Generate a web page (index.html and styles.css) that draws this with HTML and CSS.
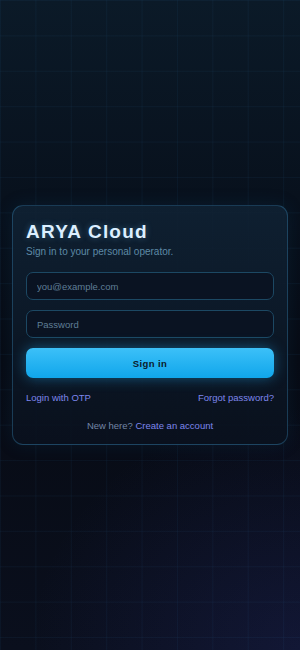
FILE: index.html
```html
<!DOCTYPE html>
<html lang="en">
<head>
    <meta charset="UTF-8">
    <meta name="viewport" content="width=device-width, initial-scale=1.0">
    <title>ARYA Cloud</title>
    <link rel="stylesheet" href="styles.css">
</head>
<body>
    <div class="grid"></div>

    <form class="login-card" onsubmit="return false">
        <h1 class="brand">ARYA Cloud</h1>
        <p class="tagline">Sign in to your personal operator.</p>

        <input class="field" type="email" placeholder="you@example.com">
        <input class="field" type="password" placeholder="Password">

        <button class="signin-btn" type="submit">Sign in</button>

        <div class="links">
            <a href="#">Login with OTP</a>
            <a href="#">Forgot password?</a>
        </div>

        <p class="signup">New here? <a href="#">Create an account</a></p>
    </form>
</body>
</html>
```

FILE: styles.css
```css
* {
    margin: 0;
    padding: 0;
    box-sizing: border-box;
}

html, body {
    height: 100%;
}

body {
    font-family: "Liberation Sans", Arial, sans-serif;
    background:
        radial-gradient(ellipse 120% 50% at 100% 100%, rgba(50, 55, 150, 0.2), transparent 75%),
        linear-gradient(180deg, #0b1a28 0%, #08111d 30%, #070b14 55%, #0a0f1d 100%);
    min-height: 100vh;
    display: flex;
    align-items: center;
    justify-content: center;
    padding: 0 12px;
    position: relative;
    overflow: hidden;
}

.grid {
    position: absolute;
    inset: 0;
    background-image:
        linear-gradient(rgba(56, 150, 220, 0.06) 1px, transparent 1px),
        linear-gradient(90deg, rgba(56, 150, 220, 0.06) 1px, transparent 1px);
    background-size: 35.4px 35.4px;
    pointer-events: none;
}

.login-card {
    position: relative;
    width: 100%;
    display: flex;
    flex-direction: column;
    padding: 15px 13px 12px;
    background: linear-gradient(180deg, rgba(16, 34, 52, 0.9), rgba(10, 17, 30, 0.92));
    border: 1px solid rgba(56, 140, 190, 0.35);
    border-radius: 11px;
    box-shadow: 0 0 18px rgba(20, 90, 140, 0.15);
}

.brand {
    font-size: 19px;
    font-weight: bold;
    letter-spacing: 1.2px;
    color: #dcefff;
    line-height: 22px;
    text-shadow: 0 0 6px rgba(120, 200, 255, 0.35);
}

.tagline {
    margin-top: 2px;
    font-size: 10px;
    color: #5d8aa6;
    line-height: 14px;
}

.field {
    margin-top: 10px;
    height: 28px;
    padding: 0 10px;
    font-family: inherit;
    font-size: 9.5px;
    color: #cfe6ff;
    background: #0a1322;
    border: 1px solid #1c4863;
    border-radius: 7px;
    outline: none;
}

.tagline + .field {
    margin-top: 13px;
}

.field::placeholder {
    color: #5f7e96;
}

.signin-btn {
    margin-top: 10px;
    height: 30px;
    font-family: inherit;
    font-size: 9.5px;
    font-weight: bold;
    letter-spacing: 0.4px;
    color: #0b1a2a;
    background: linear-gradient(180deg, #3cc0f8, #10a6eb);
    border: none;
    border-radius: 7px;
    box-shadow: 0 0 14px rgba(30, 170, 240, 0.45);
    cursor: pointer;
}

.links {
    margin-top: 14px;
    display: flex;
    justify-content: space-between;
    font-size: 9.5px;
    line-height: 12px;
}

.links a,
.signup a {
    color: #7d86ec;
    text-decoration: none;
}

.signup {
    margin-top: 16px;
    text-align: center;
    font-size: 9.5px;
    line-height: 12px;
    color: #7385a6;
}
```
